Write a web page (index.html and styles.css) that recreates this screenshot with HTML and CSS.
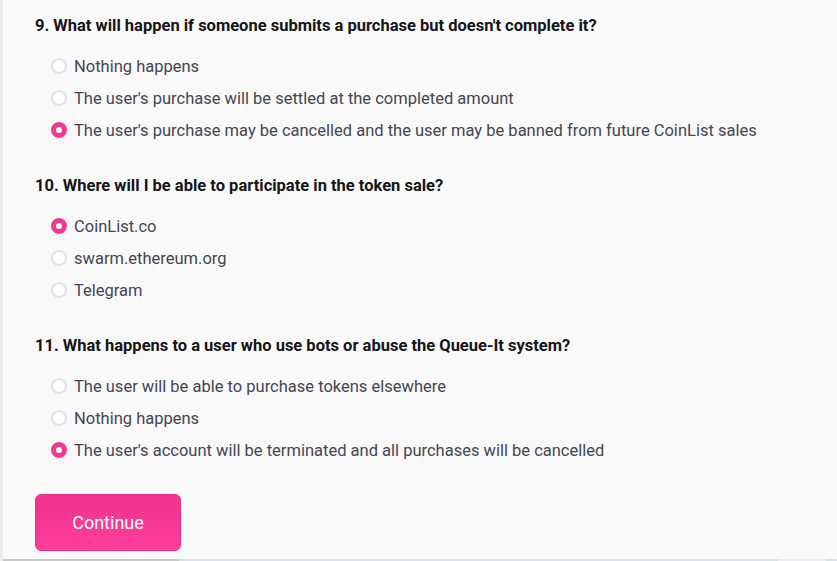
FILE: index.html
```html
<!DOCTYPE html>
<html lang="en">
<head>
    <meta charset="UTF-8">
    <meta name="viewport" content="width=device-width, initial-scale=1.0">
    <title>Quiz</title>
    <link rel="stylesheet" href="styles.css">
</head>
<body>
    <div class="quiz">
        <div class="question">
            <h3>9. What will happen if someone submits a purchase but doesn't complete it?</h3>
            <label class="option"><input type="radio" name="q9"><span class="dot"></span>Nothing happens</label>
            <label class="option"><input type="radio" name="q9"><span class="dot"></span>The user's purchase will be settled at the completed amount</label>
            <label class="option"><input type="radio" name="q9" checked><span class="dot"></span>The user's purchase may be cancelled and the user may be banned from future CoinList sales</label>
        </div>

        <div class="question">
            <h3>10. Where will I be able to participate in the token sale?</h3>
            <label class="option"><input type="radio" name="q10" checked><span class="dot"></span>CoinList.co</label>
            <label class="option"><input type="radio" name="q10"><span class="dot"></span>swarm.ethereum.org</label>
            <label class="option"><input type="radio" name="q10"><span class="dot"></span>Telegram</label>
        </div>

        <div class="question">
            <h3>11. What happens to a user who use bots or abuse the Queue-It system?</h3>
            <label class="option"><input type="radio" name="q11"><span class="dot"></span>The user will be able to purchase tokens elsewhere</label>
            <label class="option"><input type="radio" name="q11"><span class="dot"></span>Nothing happens</label>
            <label class="option"><input type="radio" name="q11" checked><span class="dot"></span>The user's account will be terminated and all purchases will be cancelled</label>
        </div>

        <button class="continue-btn">Continue</button>
    </div>
    <div class="bottom-strip">
        <div class="strip-gray"></div>
        <div class="strip-blue"></div>
        <div class="strip-light"></div>
        <div class="strip-blue2"></div>
    </div>
</body>
</html>
```

FILE: styles.css
```css
/* page */
html, body {
    margin: 0;
    height: 100%;
}

body {
    background: #f9f9f9;
    font-family: "Roboto", "Liberation Sans", sans-serif;
    border-left: 3px solid #ebebf2;
    box-sizing: border-box;
    position: relative;
    overflow: hidden;
}

.quiz {
    padding: 14px 0 0 32px;
}

/* questions */
.question {
    margin-bottom: 28px;
}

.question h3 {
    margin: 0 0 12px 0;
    font-size: 16.5px;
    font-weight: 700;
    color: #15151a;
    line-height: 24px;
}

.option {
    display: flex;
    align-items: center;
    height: 32px;
    padding-left: 16px;
    font-size: 16.5px;
    color: #454552;
    cursor: pointer;
}

.option input {
    display: none; /* hide the native radio */
}

.dot {
    width: 16px;
    height: 16px;
    border: 2px solid #dfe2ea;
    border-radius: 50%;
    background: #fff;
    box-sizing: border-box;
    margin-right: 7px;
    flex-shrink: 0;
}

.option input:checked + .dot {
    border: 5px solid #ef3b8f;
    background: #fff;
}

/* button */
.continue-btn {
    display: block;
    margin-top: 2px;
    width: 146px;
    height: 57px;
    border: 1px solid #e62f87;
    border-radius: 6px;
    background: linear-gradient(#f0338f, #ff3d9b);
    color: #fff;
    font-family: inherit;
    font-size: 18px;
    cursor: pointer;
}

/* strip along the bottom edge */
.bottom-strip {
    position: absolute;
    left: -3px;
    right: 0;
    bottom: 0;
    height: 2px;
    display: flex;
}

.strip-gray {
    width: 179px;
    background: #c9c9c9;
}

.strip-blue {
    width: 599px;
    background: #d5e2ea;
}

.strip-light {
    width: 48px;
    background: #e9eef2;
}

.strip-blue2 {
    flex: 1;
    background: #d5e2ea;
}
```
